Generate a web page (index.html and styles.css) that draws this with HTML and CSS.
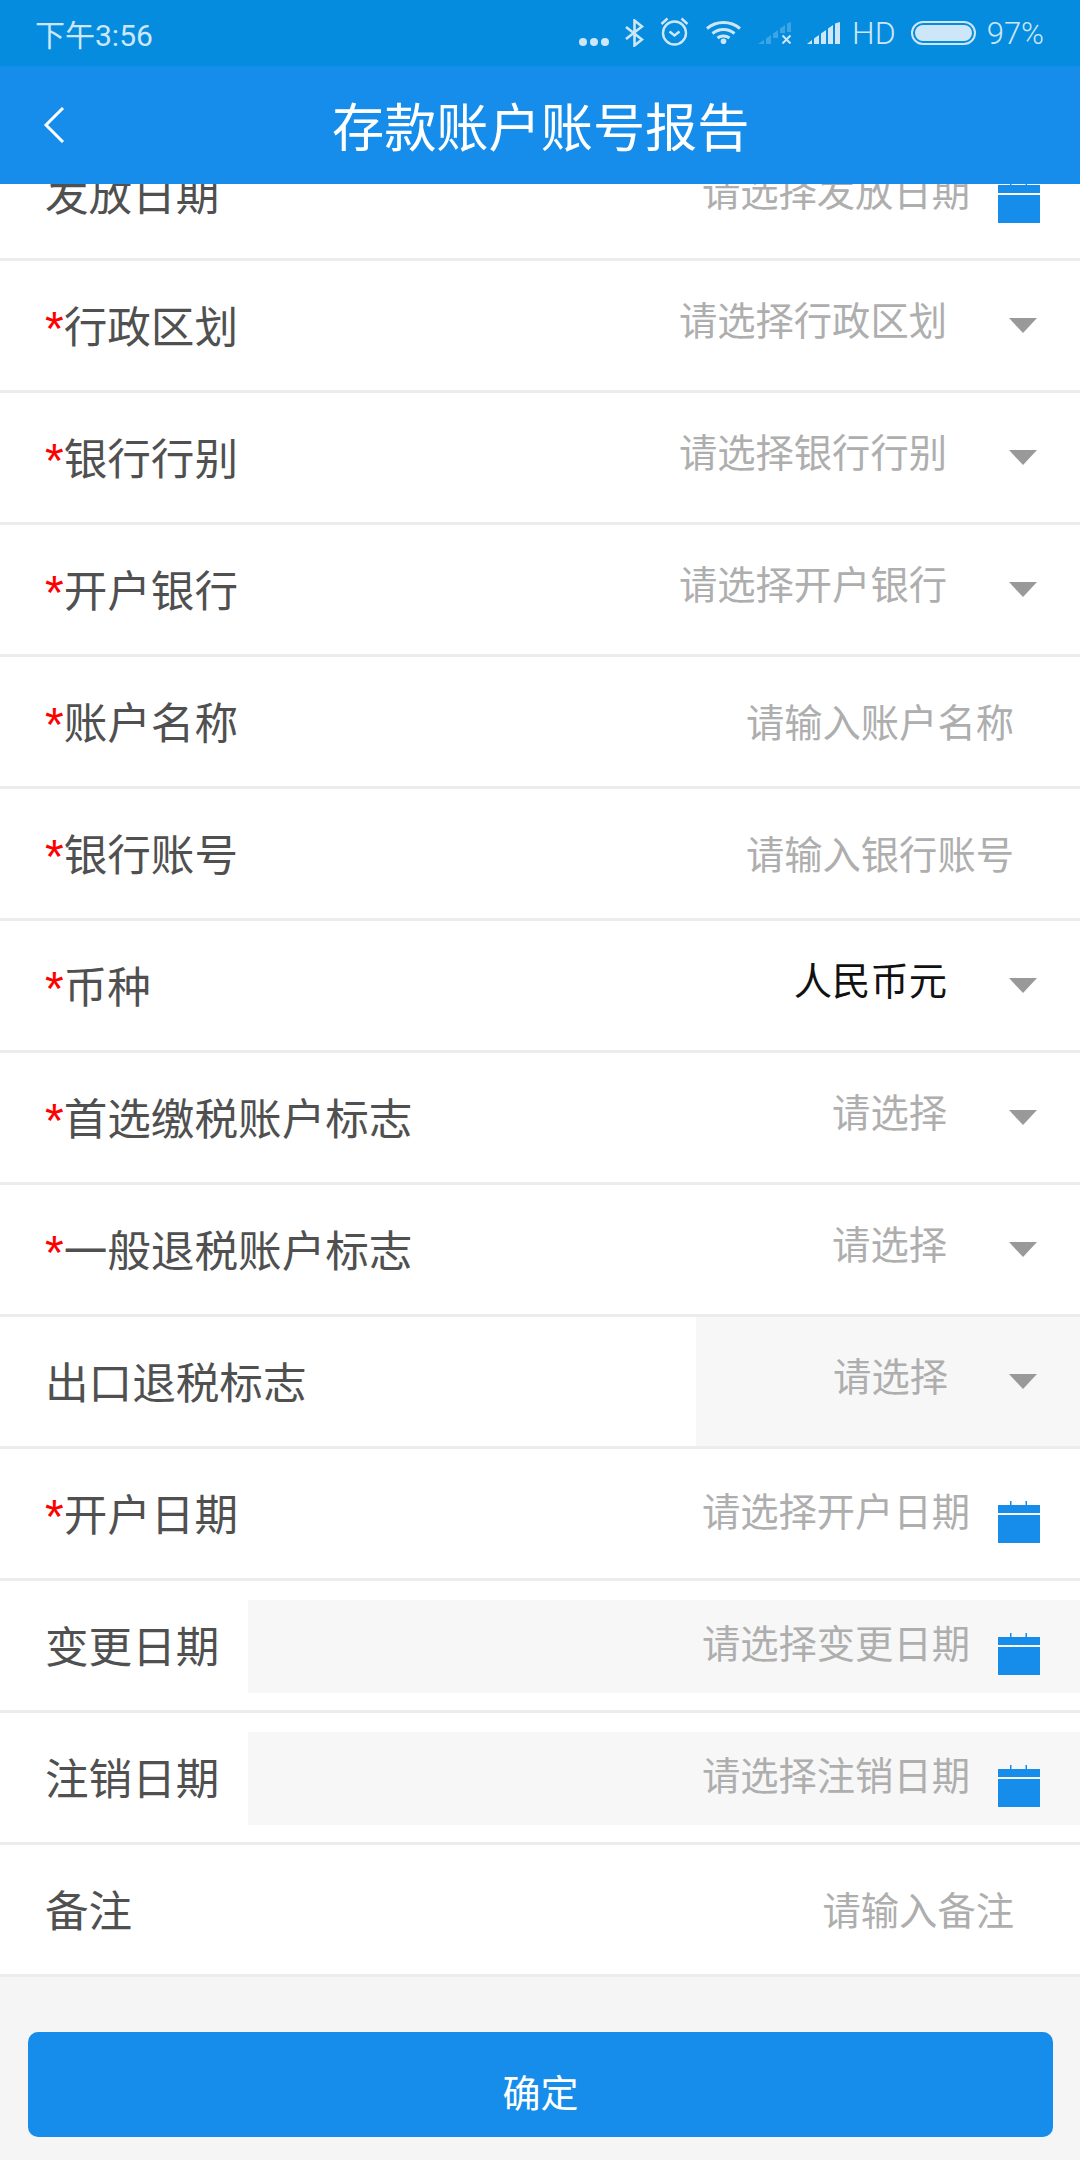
FILE: index.html
```html
<!DOCTYPE html>
<html lang="zh-CN">
<head>
    <meta charset="UTF-8">
    <meta name="viewport" content="width=device-width, initial-scale=1.0">
    <title>存款账户账号报告</title>
    <link rel="stylesheet" href="styles.css">
</head>
<body>
<div class="page">
    <div class="topBar">
        <div class="statusBar">
            <span class="time">下午3:56</span>
            <div class="statusIcons">
                <svg class="iconDots" width="30" height="8" viewBox="0 0 30 8"><circle cx="4" cy="4" r="4"/><circle cx="15" cy="4" r="4"/><circle cx="26" cy="4" r="4"/></svg>
                <svg class="iconBt" width="19" height="28" viewBox="0 0 19 28"><path d="M1 8l16 12.500-7.500 6V1.500L17 7.500 1 20" fill="none" stroke-width="2.600"/></svg>
                <svg class="iconAlarm" width="29" height="29" viewBox="0 0 29 29"><circle cx="14.500" cy="16" r="11.500" fill="none" stroke-width="2.400"/><path d="M9.500 14.500l5 4 5-4M1.500 7l6-5.500M27.500 7l-6-5.500" fill="none" stroke-width="2.400"/></svg>
                <svg class="iconWifi" width="35" height="24" viewBox="0 0 35 24"><path d="M1 8.500C10.500 .5 24.500 .5 34 8.500M6.500 13.500c6.500-5.500 15.500-5.500 22 0M11.500 18c3.500-2.800 8.500-2.800 12 0" fill="none" stroke-width="3"/><circle cx="17.500" cy="21.200" r="2.800"/></svg>
                <svg class="iconSignalOff" width="34" height="22" viewBox="0 0 34 22"><path opacity=".28" d="M0 22l6-4v4zM8 16.500l5-3.500v9H8zM15 11.500l5-3.500v8h-5zM22 6.500l5-3.500v8h-5zM29 1.500L33 0v10h-4z"/><path d="M24.500 13.500l8 8M32.500 13.500l-8 8" fill="none" stroke-width="2"/></svg>
                <svg class="iconSignal" width="34" height="22" viewBox="0 0 34 22"><path d="M0 22l5-4v4zM7 16.500l5-3.500v9H7zM14 11.500l5-3.500v14h-5zM21 6.500l5-3.500v19h-5zM28 1.500L33 0v22h-5z"/></svg>
                <span class="hd">HD</span>
                <div class="battery"><div class="batteryFill"></div></div>
                <span class="percent">97%</span>
            </div>
        </div>
        <div class="navBar">
            <svg class="back" width="24" height="36" viewBox="0 0 24 36"><path d="M21 1L4 18l17 17" fill="none" stroke="#fff" stroke-width="3"/></svg>
            <h1 class="title">存款账户账号报告</h1>
        </div>
    </div>

    <div class="list">
        <div class="row rowDate">
            <span class="label">发放日期</span>
            <div class="field"><span class="hint">请选择发放日期</span></div>
            <svg class="cal" width="42" height="42" viewBox="0 0 42 42"><path d="M0 4h12V0h1.500v4h14V0H29v4h13v8H0zM0 14h42v28H0z"/></svg>
        </div>
        <div class="row rowSelect">
            <span class="label"><i>*</i>行政区划</span>
            <div class="field"><span class="hint">请选择行政区划</span></div>
            <span class="arrow"></span>
        </div>
        <div class="row rowSelect">
            <span class="label"><i>*</i>银行行别</span>
            <div class="field"><span class="hint">请选择银行行别</span></div>
            <span class="arrow"></span>
        </div>
        <div class="row rowSelect">
            <span class="label"><i>*</i>开户银行</span>
            <div class="field"><span class="hint">请选择开户银行</span></div>
            <span class="arrow"></span>
        </div>
        <div class="row rowInput">
            <span class="label"><i>*</i>账户名称</span>
            <div class="field"><span class="hint">请输入账户名称</span></div>
        </div>
        <div class="row rowInput">
            <span class="label"><i>*</i>银行账号</span>
            <div class="field"><span class="hint">请输入银行账号</span></div>
        </div>
        <div class="row rowSelect">
            <span class="label"><i>*</i>币种</span>
            <div class="field"><span class="hint value">人民币元</span></div>
            <span class="arrow"></span>
        </div>
        <div class="row rowSelect">
            <span class="label"><i>*</i>首选缴税账户标志</span>
            <div class="field"><span class="hint">请选择</span></div>
            <span class="arrow"></span>
        </div>
        <div class="row rowSelect">
            <span class="label"><i>*</i>一般退税账户标志</span>
            <div class="field"><span class="hint">请选择</span></div>
            <span class="arrow"></span>
        </div>
        <div class="row rowSelect rowLocked">
            <span class="label">出口退税标志</span>
            <div class="field"><span class="hint">请选择</span></div>
            <span class="arrow"></span>
        </div>
        <div class="row rowDate">
            <span class="label"><i>*</i>开户日期</span>
            <div class="field"><span class="hint">请选择开户日期</span></div>
            <svg class="cal" width="42" height="42" viewBox="0 0 42 42"><path d="M0 4h12V0h1.500v4h14V0H29v4h13v8H0zM0 14h42v28H0z"/></svg>
        </div>
        <div class="row rowDate rowGrey">
            <span class="label">变更日期</span>
            <div class="field"><span class="hint">请选择变更日期</span></div>
            <svg class="cal" width="42" height="42" viewBox="0 0 42 42"><path d="M0 4h12V0h1.500v4h14V0H29v4h13v8H0zM0 14h42v28H0z"/></svg>
        </div>
        <div class="row rowDate rowGrey">
            <span class="label">注销日期</span>
            <div class="field"><span class="hint">请选择注销日期</span></div>
            <svg class="cal" width="42" height="42" viewBox="0 0 42 42"><path d="M0 4h12V0h1.500v4h14V0H29v4h13v8H0zM0 14h42v28H0z"/></svg>
        </div>
        <div class="row rowInput">
            <span class="label">备注</span>
            <div class="field"><span class="hint">请输入备注</span></div>
        </div>
    </div>

    <button class="confirm" type="button">确定</button>
</div>
</body>
</html>
```

FILE: styles.css
```css
* {
    box-sizing: border-box;
}

body {
    margin: 0;
    background-color: #f5f5f5;
    font-family: "Noto Sans CJK SC", "Noto Sans", sans-serif;
}

.page {
    height: 2160px;
    overflow: hidden;
    display: flex;
    flex-direction: column;
}

.topBar {
    position: relative;
    z-index: 2;
    flex: none;
}

.statusBar {
    height: 66px;
    background-color: #058cdf;
    color: #cde7f8;
    display: flex;
    justify-content: space-between;
    align-items: center;
    padding: 0 36px 0 35px;
}

.time {
    font-family: "Roboto", "Noto Sans CJK SC", sans-serif;
    font-size: 30px;
}

.statusIcons {
    display: flex;
    align-items: center;
}

.statusIcons svg {
    fill: #cde7f8;
    stroke: #cde7f8;
    stroke-width: 0;
}

.iconDots {
    margin-top: 18px;
    margin-right: 16px;
}

.iconBt {
    margin-right: 16px;
}

.iconAlarm {
    margin-right: 17px;
    margin-top: -3px;
}

.iconWifi {
    margin-right: 17px;
    margin-top: -2px;
}

.iconSignalOff {
    margin-right: 15px;
}

.iconSignal {
    margin-right: 11px;
}

.hd,
.percent {
    font-family: "Roboto", sans-serif;
    font-weight: 300;
}

.percent {
    font-size: 31px;
}

.hd {
    font-size: 32px;
    margin-right: 15px;
}

.battery {
    width: 65px;
    height: 24px;
    border: 2px solid #cde7f8;
    border-radius: 12px;
    padding: 2px;
    margin-right: 11px;
}

.batteryFill {
    height: 100%;
    background-color: #cde7f8;
    border-radius: 8px;
}

.navBar {
    height: 118px;
    background-color: #178deb;
    display: flex;
    align-items: center;
}

.back {
    margin-left: 42px;
    margin-right: 266px;
}

.title {
    margin: -2px 0 0;
    color: #fff;
    font-size: 52.200px;
    font-weight: 400;
}

.list {
    margin-top: -55px;
    flex: none;
}

.row {
    height: 132px;
    background-color: #fff;
    border-bottom: 3px solid #ececec;
    display: flex;
    align-items: center;
    padding-left: 45px;
    font-size: 43.600px;
}

.label {
    color: #505050;
    line-height: 64px;
    white-space: nowrap;
    flex: none;
    margin-top: -4px;
}

.label i {
    color: #f00;
    font-family: "Liberation Sans", sans-serif;
    font-size: 48px;
    font-style: normal;
    line-height: 1;
    vertical-align: -2px;
}

.field {
    flex: 1;
    height: 100%;
    display: flex;
    align-items: center;
    justify-content: flex-end;
}

.hint {
    color: #aeaeae;
    font-size: 38.300px;
    margin-top: -14px;
}

.value {
    color: #111;
}

.rowInput .hint {
    margin-top: -2px;
}

.rowDate .hint {
    margin-top: -8px;
}

.rowInput .field {
    padding-right: 66px;
}

.rowSelect .field {
    padding-right: 62px;
}

.arrow {
    flex: none;
    width: 0;
    height: 0;
    margin-right: 43px;
    border-left: 14px solid transparent;
    border-right: 14px solid transparent;
    border-top: 15px solid #999;
}

.rowDate .field {
    padding-right: 28px;
}

.cal {
    flex: none;
    margin-right: 40px;
    margin-top: 16px;
    fill: #178deb;
}

.rowLocked .field {
    flex: none;
    width: 384px;
    margin-left: auto;
    padding-right: 132px;
    background-color: #f7f7f7;
}

.rowLocked .arrow {
    margin-left: -71px;
    margin-right: 43px;
}

.rowGrey .label {
    margin-right: 29px;
}

.rowGrey .field {
    height: 93px;
    margin-top: 2px;
    background-color: #f7f7f7;
    margin-right: -82px;
    padding-right: 110px;
}

.rowGrey .hint {
    margin-top: -10px;
}

.confirm {
    margin: 55px 27px 0 28px;
    height: 105px;
    padding: 12px 0 0;
    border: none;
    border-radius: 10px;
    background-color: #178deb;
    color: #fff;
    font-family: inherit;
    font-size: 38px;
    flex: none;
}
```
